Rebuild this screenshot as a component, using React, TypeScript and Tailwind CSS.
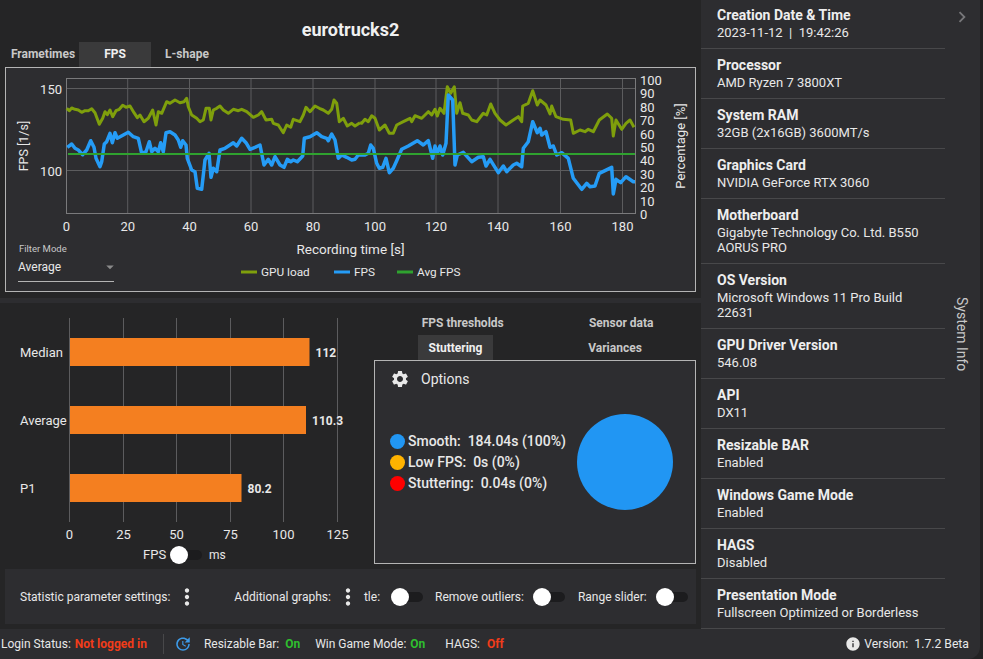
import { MdArrowDropDown, MdChevronRight, MdInfo, MdMoreVert, MdSettings, MdUpdate } from "react-icons/md";

const px = (offset: number, pts: number[][]) =>
  pts.map(([x, y]) => `${(offset + x / 3).toFixed(1)},${(70 + y / 3).toFixed(1)}`).join(" ");

const GREEN_A = [[20,115],[28,122],[35,114],[45,118],[55,120],[65,127],[75,122],[85,122],[95,116],[105,128],[118,163],[128,145],[135,125],[142,134],[150,120],[158,140],[168,122],[178,118],[188,106],[198,112],[210,108],[222,128],[232,143],[240,135],[252,155],[265,145],[278,120],[288,165],[295,125],[305,130],[320,95],[330,100],[345,90],[360,98],[372,95],[380,85],[385,110],[395,135],[410,145],[420,155],[430,150],[438,115],[448,115],[453,150],[460,120],[470,115],[480,108],[490,120],[505,130],[520,118],[535,122],[545,118],[560,125],[580,142],[595,135],[605,125],[618,150],[635,148],[640,160],[655,165],[670,188],[680,165],[692,172],[700,148],[720,155],[730,135],[738,112],[750,125],[765,108],[778,115],[790,120],[805,130],[815,118],[822,90],[830,100],[838,155],[850,145],[862,168],[875,160],[885,168],[900,158]];
const GREEN_B = [[60,158],[65,160],[75,148],[85,155],[95,137],[105,145],[118,180],[135,165],[148,190],[160,190],[170,165],[190,155],[210,145],[215,155],[225,137],[245,145],[265,125],[275,135],[285,118],[292,138],[300,115],[312,130],[322,50],[332,70],[343,50],[350,130],[360,98],[368,130],[385,135],[395,150],[410,155],[430,130],[440,135],[452,102],[465,130],[480,150],[498,165],[520,150],[535,140],[545,155],[548,108],[565,100],[578,62],[592,105],[600,90],[618,105],[630,132],[635,108],[648,140],[670,148],[692,150],[700,190],[720,180],[735,185],[745,178],[760,185],[778,150],[802,132],[815,145],[820,198],[828,150],[845,178],[858,160],[870,150],[882,172]];
const BLUE_A = [[22,232],[35,222],[45,235],[55,240],[68,254],[80,240],[92,212],[102,232],[108,265],[120,290],[125,275],[133,222],[140,215],[150,190],[157,218],[165,188],[172,205],[190,195],[205,187],[220,200],[235,205],[245,250],[258,245],[268,215],[275,245],[285,235],[295,245],[302,218],[310,245],[318,188],[330,185],[345,195],[355,210],[362,232],[368,212],[378,225],[382,265],[395,300],[405,305],[412,355],[425,358],[435,270],[447,250],[453,322],[460,295],[470,305],[480,240],[495,235],[510,225],[520,218],[530,228],[545,205],[558,218],[570,238],[585,232],[600,225],[612,285],[625,268],[635,285],[645,260],[660,285],[672,292],[682,268],[692,275],[700,270],[712,275],[728,258],[733,205],[750,200],[770,188],[785,200],[800,205],[805,212],[815,192],[825,210],[835,265],[845,255],[860,262],[875,270],[885,268],[895,255],[900,255]];
const BLUE_B = [[60,255],[75,255],[85,250],[92,225],[100,235],[110,280],[118,295],[128,292],[138,265],[148,308],[160,295],[170,272],[185,238],[205,228],[232,212],[250,225],[265,212],[278,265],[285,228],[292,250],[300,228],[308,255],[318,220],[325,75],[338,90],[345,285],[352,255],[370,247],[395,275],[415,262],[430,260],[438,288],[450,268],[475,308],[490,288],[500,305],[520,285],[530,280],[545,290],[550,235],[565,215],[578,155],[592,188],[600,175],[605,195],[618,185],[630,232],[640,228],[650,255],[665,248],[685,265],[700,325],[725,358],[740,340],[750,350],[765,348],[778,310],[815,292],[820,372],[828,328],[842,338],[858,320],[880,335],[885,335]];

const X_TICKS = [[0,66.5],[20,127.7],[40,189.5],[60,251],[80,313],[100,375],[120,436],[140,498],[160,560.5],[180,622.5]];
const PCT = [100,90,80,70,60,50,40,30,20,10,0];

const SYSTEM_INFO = [
  ["Creation Date & Time", "2023-11-12  |  19:42:26"],
  ["Processor", "AMD Ryzen 7 3800XT"],
  ["System RAM", "32GB (2x16GB) 3600MT/s"],
  ["Graphics Card", "NVIDIA GeForce RTX 3060"],
  ["Motherboard", "Gigabyte Technology Co. Ltd. B550 AORUS PRO"],
  ["OS Version", "Microsoft Windows 11 Pro Build 22631"],
  ["GPU Driver Version", "546.08"],
  ["API", "DX11"],
  ["Resizable BAR", "Enabled"],
  ["Windows Game Mode", "Enabled"],
  ["HAGS", "Disabled"],
  ["Presentation Mode", "Fullscreen Optimized or Borderless"],
];

function Toggle() {
  return (
    <span className="relative block h-[18px] w-[32px] shrink-0">
      <span className="absolute left-[3px] top-[4px] h-[10px] w-[29px] rounded-full bg-[#1c1c1e]" />
      <span className="absolute left-0 top-0 h-[18px] w-[18px] rounded-full bg-white" />
    </span>
  );
}

function FpsChart() {
  return (
    <svg viewBox="6 68 689 223" className="block h-[223px] w-[689px]" fontFamily="Roboto, sans-serif">
      {X_TICKS.map(([, x]) => (
        <line key={x} x1={x} x2={x} y1={79} y2={213} stroke="#5c5c5e" />
      ))}
      <line x1={67} x2={635} y1={88.5} y2={88.5} stroke="#5c5c5e" />
      <line x1={67} x2={635} y1={170.5} y2={170.5} stroke="#5c5c5e" />
      <rect x={66.5} y={78.5} width={569} height={135} fill="none" stroke="#7a7a7c" />
      <polyline points={px(60, GREEN_A)} fill="none" stroke="#7f9f0c" strokeWidth={3} strokeLinejoin="round" />
      <polyline points={px(340, GREEN_B)} fill="none" stroke="#7f9f0c" strokeWidth={3} strokeLinejoin="round" />
      <polyline points={px(60, BLUE_A)} fill="none" stroke="#259cf6" strokeWidth={3.5} strokeLinejoin="round" />
      <polyline points={px(340, BLUE_B)} fill="none" stroke="#259cf6" strokeWidth={3.5} strokeLinejoin="round" />
      <line x1={68} x2={635} y1={154} y2={154} stroke="#2fa22f" strokeWidth={2.2} />
      <g fill="#e8e8e8" fontSize={13}>
        <text x={62} y={94} textAnchor="end">150</text>
        <text x={62} y={176} textAnchor="end">100</text>
        {X_TICKS.map(([label, x]) => (
          <text key={label} x={x} y={231} textAnchor="middle">{label}</text>
        ))}
        {PCT.map((p, i) => (
          <text key={p} x={640} y={85 + i * 13.4}>{p}</text>
        ))}
        <text transform="translate(28,146) rotate(-90)" textAnchor="middle" fontSize={12.5}>FPS [1/s]</text>
        <text transform="translate(685,146) rotate(-90)" textAnchor="middle">Percentage [%]</text>
        <text x={350.5} y={254} textAnchor="middle" fontSize={13.5}>Recording time [s]</text>
        <text x={261} y={276} fontSize={11.8}>GPU load</text>
        <text x={354} y={276} fontSize={11.8}>FPS</text>
        <text x={417} y={276} fontSize={11.8}>Avg FPS</text>
      </g>
      <line x1={241} x2={257} y1={272} y2={272} stroke="#7f9f0c" strokeWidth={3} />
      <line x1={334} x2={350} y1={272} y2={272} stroke="#259cf6" strokeWidth={3} />
      <line x1={397} x2={413} y1={272} y2={272} stroke="#2fa22f" strokeWidth={3} />
    </svg>
  );
}

function BarChart() {
  const bars = [
    { label: "Median", y: 338, end: 309.5, value: "112" },
    { label: "Average", y: 406, end: 306, value: "110.3" },
    { label: "P1", y: 474, end: 241.5, value: "80.2" },
  ];
  const ticks = [[0, 69.5], [25, 123.5], [50, 176.5], [75, 230.5], [100, 283.5], [125, 337.5]];
  return (
    <svg viewBox="0 303 374 240" className="block h-[240px] w-[374px]" fontFamily="Roboto, sans-serif">
      {ticks.map(([, x]) => (
        <line key={x} x1={x} x2={x} y1={318} y2={522} stroke="#5c5c5e" />
      ))}
      {bars.map((b) => (
        <g key={b.label}>
          <rect x={70} y={b.y} width={b.end - 70} height={28} fill="#f47f20" />
          <text x={20} y={b.y + 19} fill="#e8e8e8" fontSize={13}>{b.label}</text>
          <text x={b.end + 6} y={b.y + 19} fill="#e8e8e8" fontSize={12} fontWeight={700}>{b.value}</text>
        </g>
      ))}
      {ticks.map(([label, x]) => (
        <text key={label} x={x} y={539} textAnchor="middle" fill="#e8e8e8" fontSize={13}>{label}</text>
      ))}
    </svg>
  );
}

export default function App() {
  return (
    <div className="h-[659px] w-[983px] overflow-hidden bg-[#222223] font-['Roboto',sans-serif] text-[13px] text-[#e8e8e8]">
      <div className="h-full w-[980px] overflow-hidden rounded-br-xl bg-[#2d2d30]">
        <div className="flex h-[629px]">
          {/* Main */}
          <main className="flex w-[701px] shrink-0 flex-col bg-[#252526]">
            <h1 className="h-[42px] pt-[17px] text-center text-[18px] font-bold leading-[26px] text-[#f0f0f0]">eurotrucks2</h1>
            <div className="flex h-[25px] pl-[7px] text-[12px] font-bold leading-[25px] text-[#c8c8c8]">
              <span className="w-[72px] text-center">Frametimes</span>
              <span className="w-[72px] bg-[#3a3a3b] text-center text-[#f0f0f0]">FPS</span>
              <span className="w-[72px] text-center">L-shape</span>
            </div>
            <section className="relative ml-[5px] h-[225px] w-[691px] border border-[#b4b4b4] bg-[#2d2d30]">
              <FpsChart />
              <div className="absolute left-[12px] top-[175px] w-[96px] border-b border-[#b4b4b4]">
                <p className="pl-px text-[9.5px] leading-[12px] text-[#c8c8c8]">Filter Mode</p>
                <div className="flex h-[26px] items-center justify-between pb-[2px] text-[12px]">
                  <span>Average</span>
                  <MdArrowDropDown className="-mr-[5px] text-[18px] text-[#8a8a8a]" />
                </div>
              </div>
            </section>
            <div className="mt-[6px] h-[5px] bg-[#2d2d30]" />
            <div className="flex h-[266px]">
              <div className="w-[374px] shrink-0">
                <BarChart />
                <div className="flex h-[24px] items-center pl-[143px] text-[13px]">
                  <span className="w-[27px]">FPS</span>
                  <Toggle />
                  <span className="ml-[7px] text-[12px]">ms</span>
                </div>
              </div>
              <div className="w-[327px] shrink-0">
                <div className="flex h-[24px] pt-[8px] text-[12px] font-bold leading-[24px] text-[#c8c8c8]">
                  <span className="ml-[10px] w-[158px] text-center">FPS thresholds</span>
                  <span className="w-[160px] text-center">Sensor data</span>
                </div>
                <div className="mt-[8px] flex h-[25px] text-[12px] font-bold leading-[26px] text-[#c8c8c8]">
                  <span className="ml-[44px] w-[75px] bg-[#3a3a3b] text-center text-[#f0f0f0]">Stuttering</span>
                  <span className="ml-[72px] w-[100px] text-center">Variances</span>
                </div>
                <section className="h-[204px] w-[322px] border border-[#b4b4b4] bg-[#2d2d30]">
                  <div className="flex h-[36px] items-center pl-[15px]">
                    <MdSettings className="text-[20px] text-[#e8e8e8]" />
                    <span className="ml-[11px] text-[14px]">Options</span>
                  </div>
                  <div className="mt-[17px] flex items-center pl-[15px]">
                    <div className="w-[187px] text-[14px] font-medium">
                      {[
                        ["bg-[#2196f3]", "Smooth:  184.04s (100%)"],
                        ["bg-[#ffb300]", "Low FPS:  0s (0%)"],
                        ["bg-[#ff0000]", "Stuttering:  0.04s (0%)"],
                      ].map(([color, text]) => (
                        <div key={text} className="flex h-[21px] items-center gap-[3px] whitespace-pre">
                          <span className={`h-[15px] w-[15px] rounded-full ${color}`} />
                          <span>{text}</span>
                        </div>
                      ))}
                    </div>
                    <div className="h-[96px] w-[96px] rounded-full bg-[#2196f3]" />
                  </div>
                </section>
              </div>
            </div>
            <div className="ml-[5px] flex h-[55px] w-[691px] items-center whitespace-nowrap bg-[#2d2d30] pt-px text-[12px]">
              <span className="ml-[15px]">Statistic parameter settings:</span>
              <MdMoreVert className="ml-[4px] shrink-0 text-[26px]" />
              <span className="ml-[34px]">Additional graphs:</span>
              <MdMoreVert className="ml-[4px] shrink-0 text-[26px]" />
              <span className="ml-[3px]">tle:</span>
              <span className="ml-[11px]"><Toggle /></span>
              <span className="ml-[12px]">Remove outliers:</span>
              <span className="ml-[9px]"><Toggle /></span>
              <span className="ml-[13px]">Range slider:</span>
              <span className="ml-[9px]"><Toggle /></span>
            </div>
            <div className="h-[5px]" />
          </main>

          {/* System info */}
          <aside className="flex min-w-0 flex-1">
            <div className="-mt-px w-[244px] shrink-0">
              {SYSTEM_INFO.map(([title, value]) => (
                <div key={title} className="border-b border-[#48484a] pb-[8px] pl-[16px] pr-[20px] pt-[7px]">
                  <p className="text-[14px] font-bold leading-[19px] text-[#eeeeee]">{title}</p>
                  <p className="whitespace-pre-wrap text-[13px] leading-[15px]">{value}</p>
                </div>
              ))}
            </div>
            <div className="flex flex-1 flex-col items-center pr-[2px] pt-[6px]">
              <MdChevronRight className="text-[22px] text-[#77777a]" />
              <span className="mt-[269px] text-[14px] leading-[18px] text-[#c8c8c8] [writing-mode:vertical-rl]">System Info</span>
            </div>
          </aside>
        </div>

        {/* Status bar */}
        <footer className="flex h-[30px] items-center whitespace-pre text-[12px]">
          <span className="ml-[1px]">Login Status:</span>
          <span className="ml-[4px] font-bold text-[#f13c1a]">Not logged in</span>
          <span className="ml-[16px] h-[20px] w-px bg-[#48484a]" />
          <MdUpdate className="ml-[10px] text-[18px] text-[#3d9be9]" />
          <span className="ml-[12px]">Resizable Bar:</span>
          <span className="ml-[6px] font-bold text-[#2fbf2f]">On</span>
          <span className="ml-[15px]">Win Game Mode:</span>
          <span className="ml-[4px] font-bold text-[#2fbf2f]">On</span>
          <span className="ml-[20px]">HAGS:</span>
          <span className="ml-[7px] font-bold text-[#f13c1a]">Off</span>
          <MdInfo className="ml-auto text-[16px]" />
          <span className="ml-[3px] mr-[11px] text-[12.2px]">Version:  1.7.2 Beta</span>
        </footer>
      </div>
    </div>
  );
}
